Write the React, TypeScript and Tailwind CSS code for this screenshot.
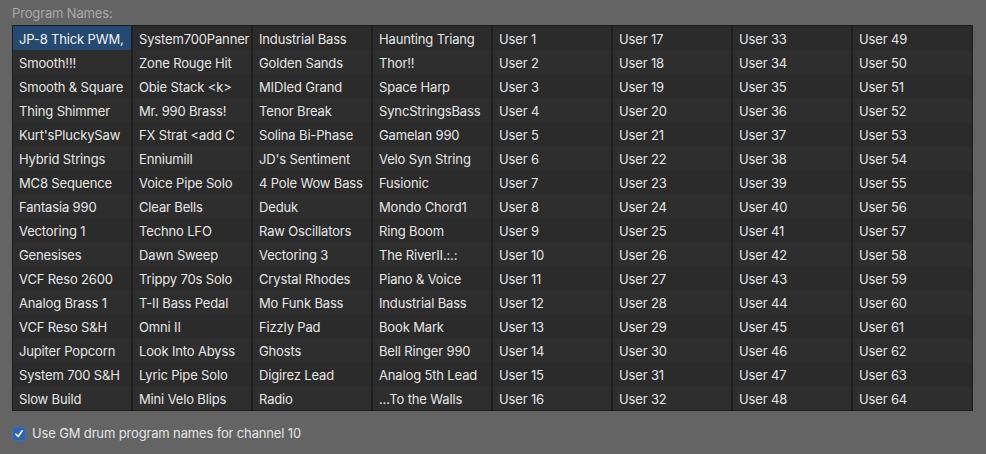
import React from "react";

const columns: string[][] = [
  ["JP-8 Thick PWM,", "Smooth!!!", "Smooth & Square", "Thing Shimmer", "Kurt'sPluckySaw", "Hybrid Strings", "MC8 Sequence", "Fantasia 990", "Vectoring 1", "Genesises", "VCF Reso 2600", "Analog Brass 1", "VCF Reso S&H", "Jupiter Popcorn", "System 700 S&H", "Slow Build"],
  ["System700Panner", "Zone Rouge Hit", "Obie Stack <k>", "Mr. 990 Brass!", "FX Strat <add C", "Enniumill", "Voice Pipe Solo", "Clear Bells", "Techno LFO", "Dawn Sweep", "Trippy 70s Solo", "T-II Bass Pedal", "Omni II", "Look Into Abyss", "Lyric Pipe Solo", "Mini Velo Blips"],
  ["Industrial Bass", "Golden Sands", "MIDIed Grand", "Tenor Break", "Solina Bi-Phase", "JD's Sentiment", "4 Pole Wow Bass", "Deduk", "Raw Oscillators", "Vectoring 3", "Crystal Rhodes", "Mo Funk Bass", "Fizzly Pad", "Ghosts", "Digirez Lead", "Radio"],
  ["Haunting Triang", "Thor!!", "Space Harp", "SyncStringsBass", "Gamelan 990", "Velo Syn String", "Fusionic", "Mondo Chord1", "Ring Boom", "The RiverII.:.:", "Piano & Voice", "Industrial Bass", "Book Mark", "Bell Ringer 990", "Analog 5th Lead", "...To the Walls"],
];
for (let c = 0; c < 4; c++) {
  columns.push(Array.from({ length: 16 }, (_, i) => `User ${c * 16 + i + 1}`));
}

export default function App() {
  return (
    <div
      className="w-[986px] h-[454px] bg-[#646464] text-[13px] tracking-[-0.15px] overflow-hidden"
      style={{ fontFamily: "Inter, 'Liberation Sans', sans-serif" }}
    >
      <div className="pl-3 pt-[5px] h-[25px] leading-[17px] text-[#a9a9a9]">Program Names:</div>
      <div className="ml-3 w-[961px] border border-[#1c1c1c] bg-[#2b2b2b] flex">
        {columns.map((col, ci) => (
          <div
            key={ci}
            className={ci < 7 ? "w-[120px] border-r-2 border-[#1f1f1f] flex flex-col" : "flex-1 flex flex-col"}
          >
            {col.map((name, ri) => {
              const selected = ci === 0 && ri === 0;
              return (
                <div
                  key={ri}
                  className={
                    "h-6 leading-[22px] pt-[2px] pl-[6px] whitespace-nowrap overflow-hidden " +
                    (selected
                      ? "bg-[#244a72] text-[#f2f2f2]"
                      : ri % 2 === 0
                      ? "bg-[#2b2b2b] text-[#e6e6e6]"
                      : "bg-[#2e2e2e] text-[#e6e6e6]")
                  }
                >
                  {name}
                </div>
              );
            })}
          </div>
        ))}
      </div>
      <div className="flex items-center gap-[6px] pl-3 mt-[13px]">
        <div className="w-[14px] h-[14px] rounded-[3px] bg-[#2d62b4] border border-[#3a6fc0] flex items-center justify-center">
          <svg width="10" height="10" viewBox="0 0 10 10">
            <path d="M2 5.2 L4.2 7.5 L8.2 1.8" fill="none" stroke="white" strokeWidth="1.6" strokeLinecap="round" strokeLinejoin="round" />
          </svg>
        </div>
        <span className="text-[#e4e4e4]">Use GM drum program names for channel 10</span>
      </div>
    </div>
  );
}
